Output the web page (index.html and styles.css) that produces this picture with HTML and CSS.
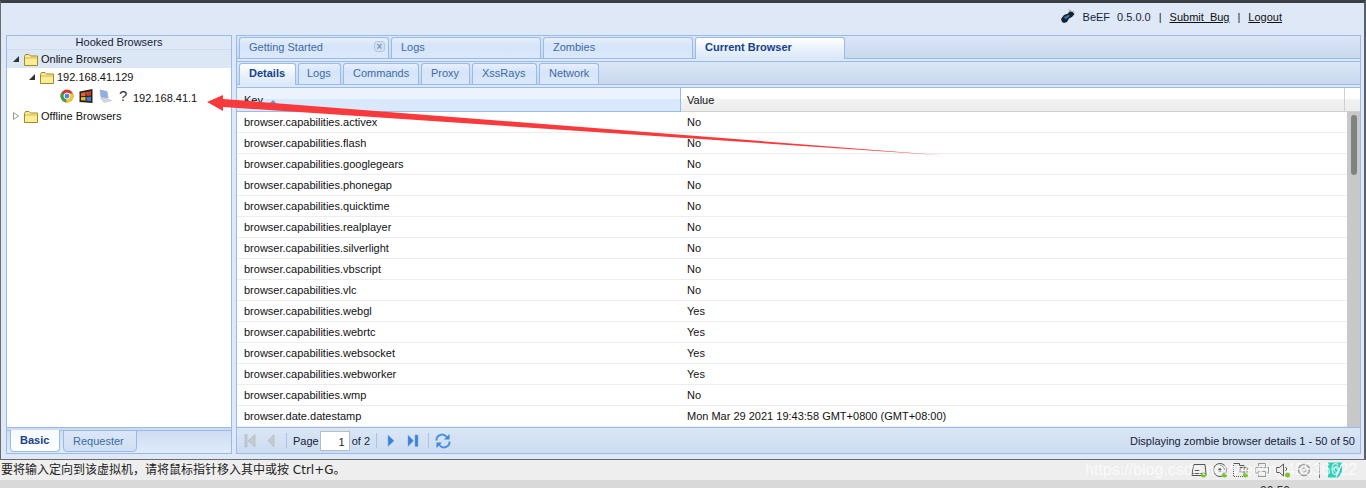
FILE: index.html
```html
<!DOCTYPE html>
<html lang="en">
<head>
<meta charset="utf-8">
<title>BeEF</title>
<link rel="stylesheet" href="styles.css">
</head>
<body>
<div class="window">
  <header class="topbar">
    <svg class="logo" width="14" height="14" viewBox="0 0 14 14"><path d="M0 10 L3 6 L7 4.5 L9 2 L12 3 L13.5 5 L11 8 L8 9.5 L6 13 L3 14 L1 13Z" fill="#16222e"/><path d="M3 8 L7 6 L9 6.5 L7 9 L4 10Z" fill="#2f78a8"/><path d="M7 0 L10 1 L11 3 L9 2.6Z M12 1.5 L13.5 3.5 L12.5 4.5 L11.5 3Z" fill="#a9b4bf"/></svg>
    <span class="brand">BeEF</span><span>0.5.0.0</span><span>|</span><a>Submit&nbsp;&nbsp;Bug</a><span>|</span><a>Logout</a>
  </header>
  <div class="main">
    <aside class="panel side">
      <div class="side-title">Hooked Browsers</div>
      <div class="tree">
        <div class="node sel"><svg class="exp" viewBox="0 0 8 8"><path d="M7 1V7H1Z" fill="#333"/></svg><svg class="folder" viewBox="0 0 15 13"><path d="M.5 3.5 L1.5 1.5H5L6.5 3H13.5V12.5H.5Z" fill="#fcec98" stroke="#a08a26"/><path d="M1 5H13.5" stroke="#d8b93e"/></svg><span>Online Browsers</span></div>
        <div class="node lvl2"><svg class="exp" viewBox="0 0 8 8"><path d="M7 1V7H1Z" fill="#333"/></svg><svg class="folder" viewBox="0 0 15 13"><path d="M.5 3.5 L1.5 1.5H5L6.5 3H13.5V12.5H.5Z" fill="#fcec98" stroke="#a08a26"/><path d="M1 5H13.5" stroke="#d8b93e"/></svg><span>192.168.41.129</span></div>
        <div class="node lvl3">
          <svg class="ic" viewBox="0 0 14 14"><circle cx="7" cy="7" r="6.5" fill="#d8392c"/><path d="M7 7 L1.4 3.6 A6.5 6.5 0 0 0 6 13.4Z" fill="#3ea047"/><path d="M7 7 L6 13.4 A6.5 6.5 0 0 0 13 4.5 L7 4.5Z" fill="#f2c530"/><circle cx="7" cy="7" r="3" fill="#4b8be0" stroke="#fff"/></svg>
          <svg class="ic" viewBox="0 0 14 14"><path d="M.5 2.5 L13.5 0 V14 L.5 13Z" fill="#2a2018"/><path d="M2 4 L6.5 3 V7 L2 7.3Z" fill="#e2642c"/><path d="M7.5 3 L12 2 V6.6 L7.5 7Z" fill="#d8362c"/><path d="M2 8.2 L6.5 8 V11.6 L2 11.2Z" fill="#e8bc3a"/><path d="M7.5 8 L12 7.8 V12.2 L7.5 11.8Z" fill="#3a7cc8"/><path d="M7.5 3 H8.5 V5 H7.5Z" fill="#58a640"/></svg>
          <svg class="ic" viewBox="0 0 14 14"><path d="M2 1 L9 2.5 L10 9 L3 8Z" fill="#8fb0e6" stroke="#9aa6bc" stroke-width=".7"/><path d="M2.5 9 L10 10 L13.5 11.5 L6 13.5Z" fill="#d5d9e2" stroke="#aab2c4" stroke-width=".5"/></svg>
          <span class="qm">?</span>
          <span class="ip">192.168.41.1</span>
        </div>
        <div class="node off"><svg class="exp" viewBox="0 0 8 8"><path d="M1.5 .5 L6.5 4 L1.5 7.5Z" fill="#fff" stroke="#999"/></svg><svg class="folder" viewBox="0 0 15 13"><path d="M.5 3.5 L1.5 1.5H5L6.5 3H13.5V12.5H.5Z" fill="#fcec98" stroke="#a08a26"/><path d="M1 5H13.5" stroke="#d8b93e"/></svg><span>Offline Browsers</span></div>
      </div>
      <div class="bottom-tabs">
        <div class="tab btab active w-basic">Basic</div>
        <div class="tab btab w-req">Requester</div>
      </div>
    </aside>
    <section class="panel content">
      <nav class="tabstrip top-strip">
        <div class="tab w-main">Getting Started<span class="close">×</span></div>
        <div class="tab w-main">Logs</div>
        <div class="tab w-main">Zombies</div>
        <div class="tab w-main active">Current Browser</div>
      </nav>
      <nav class="tabstrip sub-strip">
        <div class="tab active w-details">Details</div>
        <div class="tab w-logs">Logs</div>
        <div class="tab w-cmd">Commands</div>
        <div class="tab w-proxy">Proxy</div>
        <div class="tab w-xss">XssRays</div>
        <div class="tab w-net">Network</div>
      </nav>
      <div class="grid-head">
        <div class="th key">Key <i class="sort"></i></div>
        <div class="th val">Value</div>
        <div class="th end"></div>
      </div>
      <div class="grid-body">
        <div class="rows">
          <div class="row"><span>browser.capabilities.activex</span><span>No</span></div>
          <div class="row"><span>browser.capabilities.flash</span><span>No</span></div>
          <div class="row"><span>browser.capabilities.googlegears</span><span>No</span></div>
          <div class="row"><span>browser.capabilities.phonegap</span><span>No</span></div>
          <div class="row"><span>browser.capabilities.quicktime</span><span>No</span></div>
          <div class="row"><span>browser.capabilities.realplayer</span><span>No</span></div>
          <div class="row"><span>browser.capabilities.silverlight</span><span>No</span></div>
          <div class="row"><span>browser.capabilities.vbscript</span><span>No</span></div>
          <div class="row"><span>browser.capabilities.vlc</span><span>No</span></div>
          <div class="row"><span>browser.capabilities.webgl</span><span>Yes</span></div>
          <div class="row"><span>browser.capabilities.webrtc</span><span>Yes</span></div>
          <div class="row"><span>browser.capabilities.websocket</span><span>Yes</span></div>
          <div class="row"><span>browser.capabilities.webworker</span><span>Yes</span></div>
          <div class="row"><span>browser.capabilities.wmp</span><span>No</span></div>
          <div class="row"><span>browser.date.datestamp</span><span>Mon Mar 29 2021 19:43:58 GMT+0800 (GMT+08:00)</span></div>
        </div>
        <div class="scroll"><div class="thumb"></div></div>
      </div>
      <footer class="pager">
        <svg class="pg" viewBox="0 0 16 16"><path d="M2 1.5H4V14H2Z M12 1.5V14L5 7.8Z" fill="#c6cacf" stroke="#aeb3b9" stroke-width=".6"/></svg>
        <svg class="pg ml-prev" viewBox="0 0 16 16"><path d="M11 1.5V14L5 7.8Z" fill="#c6cacf" stroke="#aeb3b9" stroke-width=".6"/></svg>
        <i class="sep ml-sep1"></i>
        <span class="ml-page">Page</span><span class="pageno">1</span><span class="ml-of">of 2</span>
        <i class="sep ml-sep2"></i>
        <svg class="pg ml-next" viewBox="0 0 16 16"><path d="M8 2V13.5L14 7.8Z" fill="#3a7fd8" stroke="#7aaee8" stroke-width=".5"/></svg>
        <svg class="pg ml-last" viewBox="0 0 16 16"><path d="M4 2V13.5L9.5 7.8Z M11 2H14V13.5H11Z" fill="#3a7fd8" stroke="#7aaee8" stroke-width=".5"/></svg>
        <i class="sep ml-sep3"></i>
        <svg class="pg ml-ref" viewBox="0 0 16 16"><path d="M1.5 7.5 A5.5 5.5 0 0 1 11.5 4" fill="none" stroke="#4a94dc" stroke-width="2"/><path d="M9 6.5H14.5V1Z" fill="#3a88d6"/><path d="M14.5 8.5 A5.5 5.5 0 0 1 4.5 12" fill="none" stroke="#4a94dc" stroke-width="2"/><path d="M7 9.5H1.5V15Z" fill="#3a88d6"/></svg>
        <span class="summary">Displaying zombie browser details 1 - 50 of 50</span>
      </footer>
    </section>
  </div>
</div>
<div class="statusbar">
  <span class="hint">要将输入定向到该虚拟机，请将鼠标指针移入其中或按 Ctrl+G。</span>
  <div class="tray">
    <svg class="tic" viewBox="0 0 16 16"><path d="M3 2.5H14L15 11.5H1Z M1 11.5V13.5H15V11.5 M3 8.5H9" fill="none" stroke="#555"/><circle cx="12.5" cy="13" r="2.5" fill="#7ac52c"/></svg>
    <svg class="tic" viewBox="0 0 16 16"><circle cx="8" cy="8" r="6.5" fill="none" stroke="#555"/><circle cx="8" cy="8" r="1.8" fill="#555"/><path d="M8 3.5 A4.5 4.5 0 0 1 12.5 8" fill="none" stroke="#999"/><circle cx="12.5" cy="13" r="2.5" fill="#7ac52c"/></svg>
    <svg class="tic" viewBox="0 0 16 16"><path d="M.5 1.5H6.5V3.5 M6.5 3.5H11V8" fill="none" stroke="#555"/><rect x="7" y="5.5" width="7" height="4.5" fill="none" stroke="#555"/><path d="M.5 3V14.5H11" fill="none" stroke="#555" stroke-dasharray="1 1"/><circle cx="12.5" cy="13" r="2.5" fill="#7ac52c"/></svg>
    <svg class="tic" viewBox="0 0 16 16"><rect x="4.5" y="1.5" width="7" height="4" fill="none" stroke="#999"/><rect x="1.5" y="5.5" width="13" height="5.5" fill="none" stroke="#999"/><rect x="4.5" y="9.5" width="7" height="5" fill="#eee" stroke="#999"/></svg>
    <svg class="tic" viewBox="0 0 16 16"><path d="M1.5 5.5H4.5L8.5 2V14L4.5 10.5H1.5Z" fill="none" stroke="#555"/><path d="M10.5 5 L12 7 L10.5 9" fill="none" stroke="#555"/><circle cx="12.5" cy="13" r="2.5" fill="#7ac52c"/></svg>
    <svg class="tic" viewBox="0 0 16 16"><circle cx="8" cy="8" r="5.5" fill="none" stroke="#a0a0a0" stroke-width="1.6"/><circle cx="8" cy="8" r="2" fill="none" stroke="#a0a0a0"/></svg>
    <i class="tray-sep"></i>
    <svg class="tic" viewBox="0 0 16 16"><path d="M1 .5H15V11L11 15.5H1Z" fill="#2ccfb8"/><path d="M15 1.5 L9 15" stroke="#f2f2f2" stroke-width="1.2"/><path d="M8 5 A2.5 3 0 1 1 7.9 5.1" fill="none" stroke="#e6fffb"/></svg>
  </div>
  <div class="watermark">https://blog.csdn.net/weixin_45536622</div>
</div>
<div class="desk"><span>20:50</span></div>
<svg class="arrow" width="1366" height="488" viewBox="0 0 1366 488"><path d="M207 102 L223 95 L223 99 L945 155.5 L223 107 L223 111 Z" fill="#f93a3c"/></svg>
</body>
</html>
```
FILE: styles.css
```css
html, body { margin: 0; padding: 0; height: 488px; overflow: hidden; }
body { position: relative; font: 11px/13px "Liberation Sans", Arial, sans-serif; color: #222; background: #d9d9d9; display: flex; flex-direction: column; }
svg { display: block; flex: none; }

.window { height: 460px; box-sizing: border-box; background: #dfe8f6; border-top: 3px solid #3c4046; border-left: 1px solid #6a6d70; border-right: 2px solid #5c6066; border-bottom: 1px solid #6a6d70; display: flex; flex-direction: column; padding: 0 3px 5px 5px; }

.topbar { height: 32px; box-sizing: border-box; flex: none; display: flex; align-items: center; justify-content: flex-end; gap: 8px; padding: 0 79px 3px 0; color: #15233a; }
.topbar a { text-decoration: underline; color: #111; }
.logo { margin-right: 0; margin-top: -3px; }
.brand { margin-right: -1px; }

.main { flex: 1; display: flex; gap: 4px; min-height: 0; }
.panel { border: 1px solid #99bbe8; box-sizing: border-box; background: #fff; display: flex; flex-direction: column; }
.side { width: 226px; flex: none; }
.content { flex: 1; min-width: 0; background: #dfe8f6; }

.side-title { height: 13px; flex: none; text-align: center; line-height: 13px; background: #dfe8f6; color: #15233a; border-bottom: 1px solid #cfdcef; }
.tree { flex: 1; min-height: 0; background: #fff; color: #111; }
.node { display: flex; align-items: center; height: 18px; padding-left: 5px; }
.node.sel { background: #dce7f6; }
.node.lvl2 { padding-left: 21px; }
.node.lvl3 { height: 21px; padding: 3px 0 0 53px; gap: 5px; box-sizing: border-box; align-items: flex-start; }
.exp { width: 8px; height: 8px; margin-right: 4px; }
.folder { width: 15px; height: 13px; margin-right: 2px; }
.ic { width: 14px; height: 14px; }
.qm { width: 8px; margin-left: 2px; margin-right: 1px; text-align: center; font-size: 15px; line-height: 13px; color: #333; }
.ip { margin-top: 3px; color: #111; }

.bottom-tabs { height: 26px; flex: none; box-sizing: border-box; border-top: 1px solid #99bbe8; background: linear-gradient(#99bbe8, #99bbe8) 0 2px / 100% 1px no-repeat, linear-gradient(#cddbf0, #e0ebfb); display: flex; align-items: flex-start; gap: 3px; padding: 2px 0 0 3px; }
.tab { box-sizing: border-box; height: 21px; border: 1px solid #99bbe8; border-bottom: none; border-radius: 3px 3px 0 0; background: linear-gradient(#e6effc, #d6e5fa 40%, #dbe8fb); color: #416aa3; line-height: 19px; position: relative; }
.tab.active { background: linear-gradient(#fff, #e6effc 60%, #dbe8fb); color: #15428b; font-weight: bold; height: 22px; margin-bottom: -1px; z-index: 1; }
.btab { height: 22px; border-bottom: 1px solid #99bbe8; border-radius: 0 0 4px 4px; line-height: 20px; padding-left: 9px; background: linear-gradient(#dbe7f8, #d0dff4); }
.btab.active { height: 22px; background: linear-gradient(#f6f9fe, #fff); border-top: none; line-height: 21px; margin-bottom: 0; }
.w-basic { width: 50px; }
.w-req { width: 74px; }

.tabstrip { flex: none; display: flex; align-items: flex-end; background: linear-gradient(#dbe6f7, #c9d8ee); border-bottom: 1px solid #99bbe8; box-sizing: border-box; gap: 2px; padding-left: 2px; }
.top-strip { height: 23px; }
.sub-strip { height: 24px; margin-top: 2px; border-top: 1px solid #99bbe8; }
.w-main { width: 150px; padding-left: 9px; }
.w-details { width: 57px; padding-left: 9px; }
.w-logs { width: 43px; padding-left: 8px; }
.w-cmd { width: 76px; padding-left: 9px; }
.w-proxy { width: 49px; padding-left: 9px; }
.w-xss { width: 65px; padding-left: 9px; }
.w-net { width: 60px; padding-left: 9px; }
.close { position: absolute; right: 3px; top: 3px; width: 11px; height: 11px; border-radius: 3px; border: 1px solid #b4c8e4; background: #d2dff2; font: bold 10px/9px "Liberation Sans", sans-serif; text-align: center; color: #7f97b8; box-sizing: border-box; }

.grid-head { flex: none; height: 25px; margin-top: 2px; border-top: 1px solid #99bbe8; display: flex; box-sizing: border-box; background: #fff; }
.th { box-sizing: border-box; line-height: 25px; padding-left: 6px; background: linear-gradient(#fff 45%, #f2f2f2 50%, #ececec); border-bottom: 1px solid #d0d0d0; color: #111; }
.th.key { width: 444px; padding-left: 7px; background: linear-gradient(#ebf3fd 45%, #d9e8fb 50%, #d9e8fb); border-bottom-color: #99bbe8; border-right: 1px solid #99bbe8; }
.th.val { flex: 1; border-right: 1px solid #d0d0d0; }
.th.end { width: 15px; padding: 0; }
.sort { display: inline-block; width: 0; height: 0; border: 4px solid transparent; border-top: 0; border-bottom: 4px solid #6a94cc; margin-left: 3px; }

.grid-body { flex: 1; min-height: 0; display: flex; background: #fff; overflow: hidden; }
.rows { flex: 1; min-width: 0; }
.row { height: 21px; box-sizing: border-box; border-bottom: 1px solid #ededed; display: flex; line-height: 20px; color: #111; }
.row span:first-child { width: 450px; padding-left: 7px; box-sizing: border-box; }
.scroll { width: 13px; flex: none; background: #c8c8c8; padding: 3px 3px 0 4px; box-sizing: border-box; }
.thumb { height: 60px; border-radius: 3px; background: #7f8282; }

.pager { flex: none; height: 26px; box-sizing: border-box; border-top: 1px solid #99bbe8; background: linear-gradient(#dae6f6, #cddcf1); display: flex; align-items: center; padding: 1px 5px 0 6px; color: #15233a; }
.pg { width: 16px; height: 16px; margin-top: -1px; }
.sep { width: 1px; height: 15px; background: #a9c3e6; margin-top: -1px; }
.ml-prev { margin-left: 4px; }
.ml-sep1 { margin-left: 7px; }
.ml-page { margin-left: 6px; }
.pageno { width: 30px; height: 20px; margin-left: 1px; margin-top: -1px; box-sizing: border-box; background: #fff; border: 1px solid #b5bdc7; text-align: right; line-height: 20px; padding-right: 4px; }
.ml-of { margin-left: 2px; }
.ml-sep2 { margin-left: 6px; }
.ml-next { margin-left: 3px; }
.ml-last { margin-left: 8px; }
.ml-sep3 { margin-left: 8px; }
.ml-ref { margin-left: 6px; }
.summary { margin-left: auto; }

.statusbar { height: 20px; flex: none; background: #eeeeee; display: flex; align-items: center; position: relative; font: 12px/20px "DejaVu Sans", "Noto Sans CJK SC", sans-serif; color: #222; }
.hint { padding-left: 1px; }
.tray { margin-left: auto; display: flex; align-items: center; gap: 5px; padding-right: 23px; }
.tic { width: 16px; height: 16px; }
.tray-sep { width: 1px; height: 15px; margin: 0 2px; background: #777; }
.watermark { position: absolute; left: 1085px; top: -2px; font: 16px/24px "Liberation Sans", sans-serif; color: rgba(255,255,255,.72); white-space: nowrap; }
.desk { flex: 1; background: #d9d9d9; text-align: right; padding-right: 76px; overflow: hidden; font: 12px/14px "Liberation Sans", sans-serif; color: #333; }
.desk span { display: block; margin-top: 4px; }
.arrow { position: absolute; left: 0; top: 0; pointer-events: none; }
```
